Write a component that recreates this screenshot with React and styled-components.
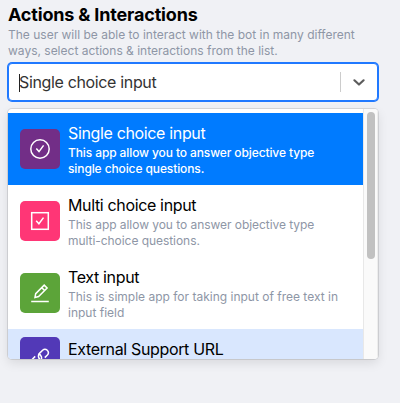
import React from "react"
import styled, { createGlobalStyle } from "styled-components"

const GlobalStyle = createGlobalStyle`
    * {
        box-sizing: border-box;
    }
    body {
        margin: 0;
        background: #f0f1f5;
        font-family: Inter, "Liberation Sans", sans-serif;
        color: #000;
    }
`
const Panel = styled.section`
    width: 386px;
    min-height: 403px;
    padding: 2px 8px 0;
`
const Heading = styled.h2`
    margin: 0;
    font-size: 18px;
    font-weight: 700;
    line-height: 25px;
    letter-spacing: -0.17px;
    white-space: nowrap;
`
const Hint = styled.p`
    margin: 0;
    font-size: 12px;
    font-weight: ${({ $weight }) => $weight || 400};
    line-height: 16px;
    letter-spacing: ${({ $spacing }) => $spacing || "0"};
    color: ${({ $color }) => $color || "#8e96a6"};
    white-space: nowrap;
`
const Control = styled.div`
    display: flex;
    align-items: center;
    height: 38px;
    margin-top: 4px;
    border: 1px solid #2079ff;
    border-radius: 4px;
    box-shadow: 0 0 0 1px #2079ff;
    background: #fff;
`
const Value = styled.div`
    flex: 1;
    padding-left: 10px;
    font-size: 16px;
    line-height: 20px;
    letter-spacing: -0.35px;
    color: #333;
    white-space: nowrap;
`
const Caret = styled.span`
    display: inline-block;
    width: 1px;
    height: 18px;
    margin-right: -1px;
    vertical-align: -4px;
    background: #222;
`
const Separator = styled.span`
    width: 1px;
    height: 20px;
    background: #ccc;
`
const Indicator = styled.span`
    display: flex;
    padding: 8px;
    color: #5c5c5c;
`
const Menu = styled.div`
    display: flex;
    height: 250px;
    margin-top: 8px;
    border-radius: 4px;
    background: #fff;
    box-shadow: 0 0 0 1px rgba(0, 0, 0, 0.1), 0 4px 11px rgba(0, 0, 0, 0.1);
    overflow: hidden;
`
const OptionList = styled.div`
    flex: 1;
    padding-top: 4px;
`
const Option = styled.div`
    display: flex;
    align-items: ${({ $align }) => $align || "center"};
    gap: 8px;
    padding: 8px 12px;
    background: ${({ $background }) => $background || "#fff"};
    color: ${({ $color }) => $color || "#000"};
`
const IconTile = styled.div`
    display: flex;
    align-items: center;
    justify-content: center;
    width: 40px;
    height: 40px;
    border-radius: 5px;
    background: ${({ $background }) => $background};
`
const OptionTitle = styled.div`
    font-size: 16px;
    line-height: 24px;
    letter-spacing: -0.35px;
    white-space: nowrap;
`
const Track = styled.div`
    width: 15px;
    padding: 3px 3px 0;
    border-left: 1px solid #e8e8e8;
    border-right: 1px solid #ededed;
    background: #fafafa;
`
const Thumb = styled.div`
    width: 8px;
    height: 147px;
    border-radius: 4px;
    background: #c1c1c1;
`

const Icon = ({ children }) => (
    <svg width="24" height="24" viewBox="0 0 24 24" fill="none" stroke="#fff" strokeWidth="1.5">
        {children}
    </svg>
)

const options = [
    {
        title: "Single choice input",
        lines: ["This app allow you to answer objective type", "single choice questions."],
        tile: "#722e87",
        background: "#007bff",
        color: "#fff",
        hint: "#fff",
        weight: 500,
        spacing: "-0.11px",
        icon: <><circle cx="12" cy="12" r="9.2" /><path d="M8.3 11.6l2.7 3 4.6-6.2" /></>,
    },
    {
        title: "Multi choice input",
        lines: ["This app allow you to answer objective type", "multi-choice questions."],
        tile: "#ff3676",
        spacing: "-0.05px",
        icon: <><rect x="3.7" y="3.7" width="16.6" height="16.6" /><path d="M8.2 11.8l2.7 3 4.6-6.2" /></>,
    },
    {
        title: "Text input",
        lines: ["This is simple app for taking input of free text in", "input field"],
        tile: "#5ca439",
        icon: <path d="M3.2 20.4h17.6M7 16.4l.7-3.8 8.5-8.5 2.9 2.9-8.5 8.6zM13.7 6.6l2.900 2.900" />,
    },
    {
        title: "External Support URL",
        lines: [],
        tile: "#5239b7",
        background: "#d9e7fe",
        align: "flex-start",
        icon: <path d="M13.7 15.300a4.300 4.300 0 0 1-2-7.200l2.900-2.900a3.400 3.400 0 0 1 4.800 4.800l-2.600 2.600M10.300 8.700a4.300 4.300 0 0 1 2 7.200l-2.900 2.900a3.400 3.400 0 0 1-4.800-4.800l2.600-2.600" />,
    },
]

const App = () => {
    return (
        <>
            <GlobalStyle />
            <Panel>
                <Heading>Actions &amp; Interactions</Heading>
                <Hint>The user will be able to interact with the bot in many different</Hint>
                <Hint>ways, select actions &amp; interactions from the list.</Hint>
                <Control>
                    <Value><Caret />Single choice input</Value>
                    <Separator />
                    <Indicator>
                        <svg width="20" height="20" viewBox="0 0 20 20" fill="none" stroke="currentColor" strokeWidth="2.2" strokeLinecap="round" strokeLinejoin="round">
                            <path d="M5.4 8.3l4.6 4.2 4.6-4.2" />
                        </svg>
                    </Indicator>
                </Control>
                <Menu>
                    <OptionList>
                        {options.map((option) => (
                            <Option key={option.title} $background={option.background} $color={option.color} $align={option.align}>
                                <IconTile $background={option.tile}><Icon>{option.icon}</Icon></IconTile>
                                <div>
                                    <OptionTitle>{option.title}</OptionTitle>
                                    {option.lines.map((line) => (
                                        <Hint key={line} $color={option.hint} $weight={option.weight} $spacing={option.spacing}>{line}</Hint>
                                    ))}
                                </div>
                            </Option>
                        ))}
                    </OptionList>
                    <Track><Thumb /></Track>
                </Menu>
            </Panel>
        </>
    )
}

export default App
